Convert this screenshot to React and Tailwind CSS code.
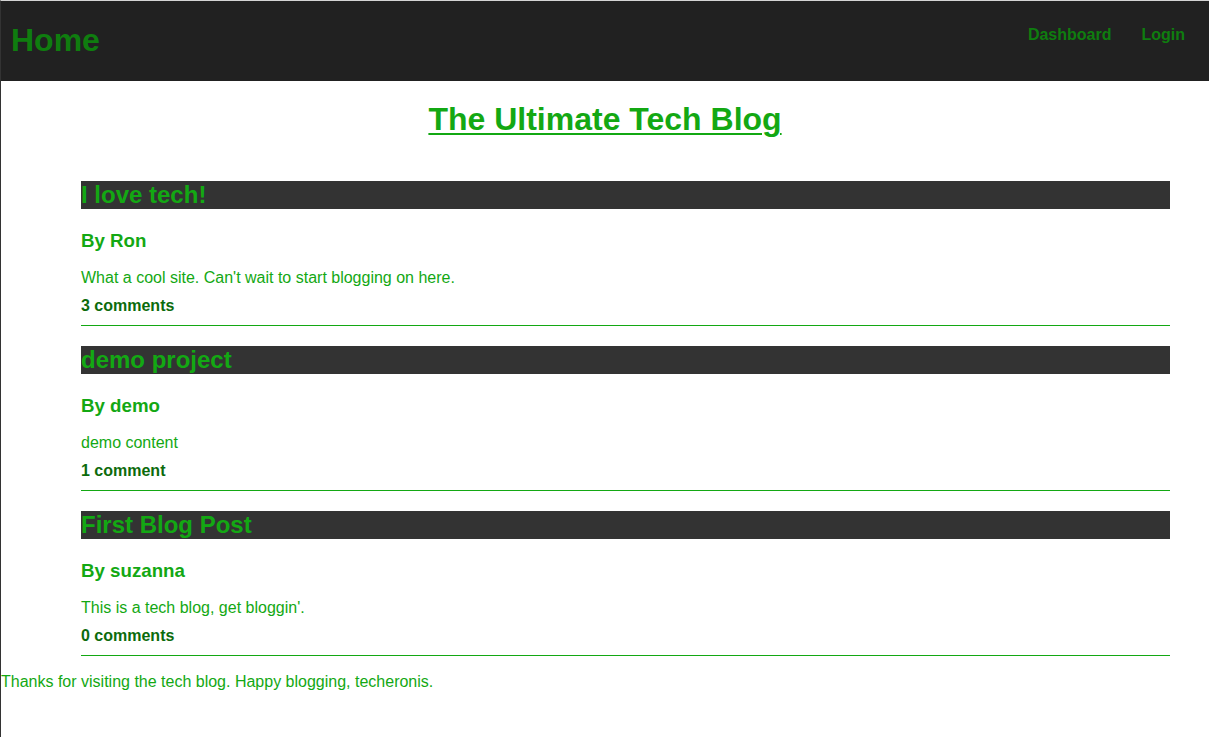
const posts = [
  { title: 'I love tech!', author: 'Ron', body: "What a cool site. Can't wait to start blogging on here.", comments: '3 comments' },
  { title: 'demo project', author: 'demo', body: 'demo content', comments: '1 comment' },
  { title: 'First Blog Post', author: 'suzanna', body: "This is a tech blog, get bloggin'.", comments: '0 comments' },
];

export default function App() {
  return (
    <div className="min-h-[737px] bg-white border-l border-l-[#333] border-t border-t-[#d4d4d4] font-['Liberation_Sans',Arial,sans-serif]">
      <header className="h-[80px] bg-[#212121] flex items-start justify-between">
        <a className="ml-[10px] mt-[21px] text-[32px] leading-[37px] font-bold text-[#0f7d0f]">Home</a>
        <nav className="flex gap-[30px] mr-[24px] mt-[25px]">
          <a className="text-[16px] leading-[18px] font-bold text-[#0f7d0f]">Dashboard</a>
          <a className="text-[16px] leading-[18px] font-bold text-[#0f7d0f]">Login</a>
        </nav>
      </header>

      <h1 className="mt-[20px] text-center text-[32px] leading-[37px] font-bold text-[#13a813] underline decoration-2 underline-offset-[3px]">
        The Ultimate Tech Blog
      </h1>

      <main className="mt-[43px] pl-[80px] pr-[39px]">
        {posts.map((p) => (
          <article key={p.title} className="mb-[20px] border-b border-b-[#13a813]">
            <h2 className="bg-[#333333] text-[24px] leading-[28px] font-bold text-[#13a813]">{p.title}</h2>
            <h3 className="mt-[21px] text-[18.72px] leading-[22px] font-bold text-[#13a813]">By {p.author}</h3>
            <p className="mt-[17px] text-[16px] leading-[18px] text-[#13a813]">{p.body}</p>
            <p className="mt-[10px] mb-[10px] text-[16px] leading-[18px] font-bold text-[#0c6b0c]">{p.comments}</p>
          </article>
        ))}
      </main>

      <footer className="-mt-[3px] text-[16px] leading-[18px] text-[#13a813]">
        Thanks for visiting the tech blog. Happy blogging, techeronis.
      </footer>
    </div>
  );
}
